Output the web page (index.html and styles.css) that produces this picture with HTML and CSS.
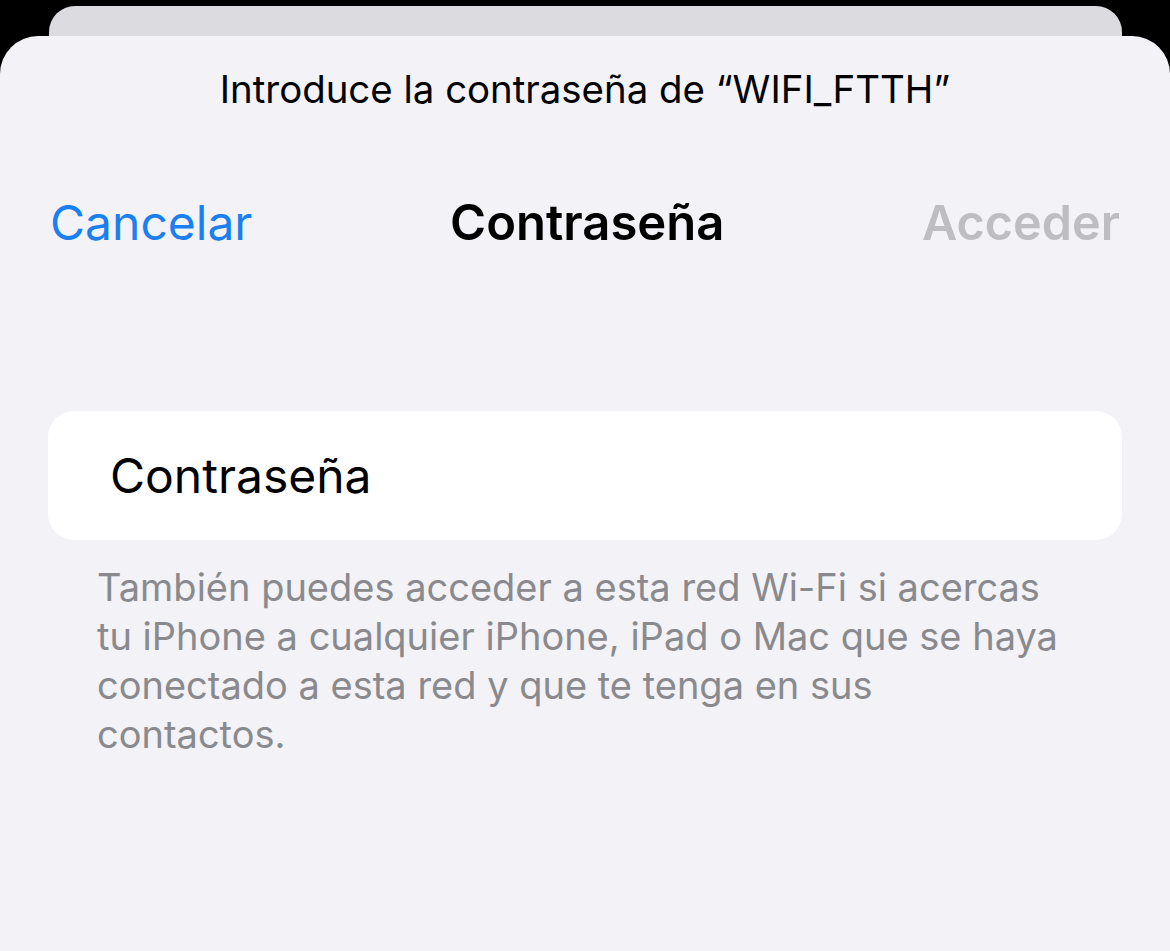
FILE: index.html
```html
<!DOCTYPE html>
<html lang="es">
<head>
<meta charset="utf-8">
<link rel="stylesheet" href="styles.css">
</head>
<body>
<div class="screen">
  <div class="back-card"></div>
  <div class="sheet">
    <div class="prompt">Introduce la contraseña de “WIFI_FTTH”</div>
    <div class="navbar">
      <span class="nav-btn cancel">Cancelar</span>
      <span class="nav-title">Contraseña</span>
      <span class="nav-btn join">Acceder</span>
    </div>
    <div class="field">
      <span class="field-label">Contraseña</span>
    </div>
    <p class="footer">También puedes acceder a esta red Wi-Fi si acercas tu iPhone a cualquier iPhone, iPad o Mac que se haya conectado a esta red y que te tenga en sus contactos.</p>
  </div>
</div>
</body>
</html>
```
FILE: styles.css
```css
html, body {
  margin: 0;
  padding: 0;
  background: #000;
  height: 100%;
  overflow: hidden;
}
body {
  font-family: Inter, "Noto Sans", sans-serif;
}
.screen {
  display: flex;
  flex-direction: column;
  height: 951px;
}
.back-card {
  margin: 6px 48px 0 49px;
  height: 70px;
  background: #dcdce0;
  border-radius: 26px 26px 0 0;
  flex: none;
}
.sheet {
  margin-top: -40px;
  flex: 1;
  background: #f2f2f7;
  border-radius: 38px 38px 0 0;
  display: flex;
  flex-direction: column;
}
.prompt {
  text-align: center;
  font-size: 38.4px;
  color: #000;
  margin-top: 30px;
  line-height: 46px;
}
.navbar {
  display: flex;
  justify-content: space-between;
  align-items: center;
  padding: 0 50px 0 50px;
  margin-top: 82px;
  height: 56px;
}
.nav-btn {
  font-size: 48px;
}
.cancel {
  color: #1a7ff0;
}
.join {
  color: #bdbdc2;
  font-weight: 600;
  font-size: 48.5px;
}
.nav-title {
  font-size: 49px;
  font-weight: 600;
  color: #000;
}
.field {
  margin: 161px 48px 0 48px;
  height: 129px;
  background: #fff;
  border-radius: 26px;
  display: flex;
  align-items: center;
  padding-left: 62px;
}
.field-label {
  font-size: 48px;
  color: #000;
}
.footer {
  margin: 23px 0 0 97px;
  width: 966px;
  font-size: 38px;
  line-height: 49px;
  color: #8a8a8e;
}
```
